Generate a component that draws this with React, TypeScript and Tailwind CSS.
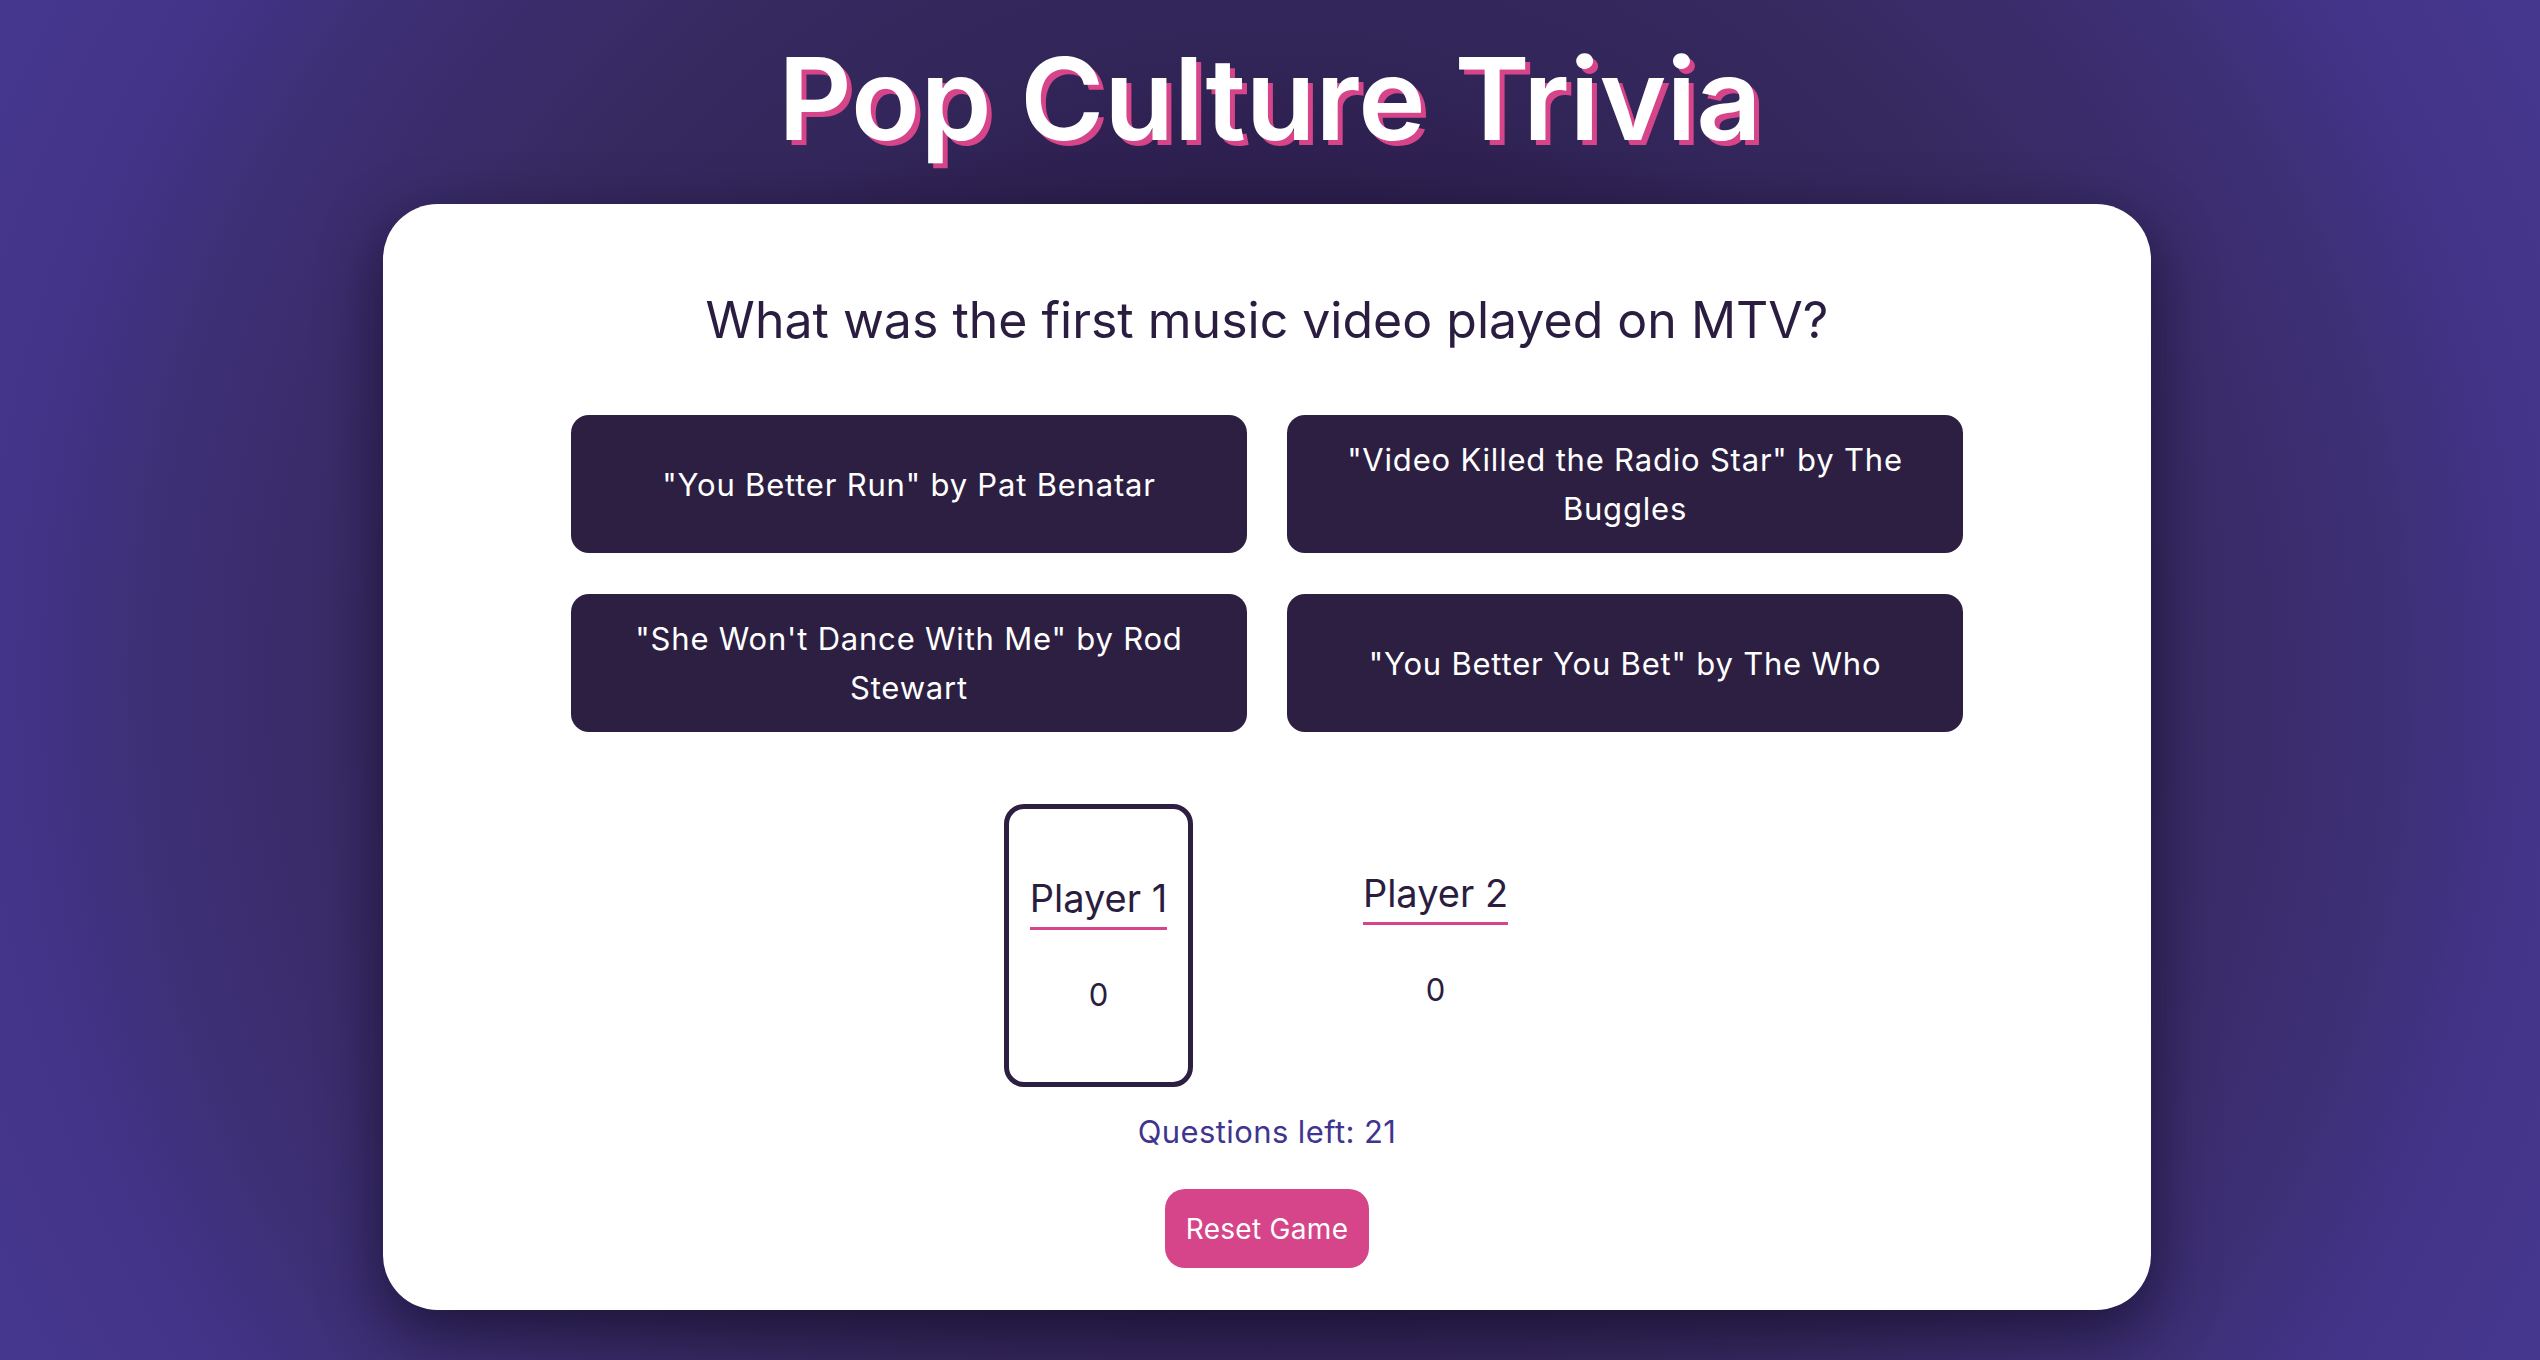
import { useState } from "react";

const answers = [
  '"You Better Run" by Pat Benatar',
  '"Video Killed the Radio Star" by The Buggles',
  '"She Won\'t Dance With Me" by Rod Stewart',
  '"You Better You Bet" by The Who',
];

export default function App() {
  const [scores] = useState([0, 0]);
  const [active] = useState(0);

  return (
    <div className="min-h-screen w-full bg-[radial-gradient(circle_at_center,#1e1436_0%,#2a1d4a_30%,#33265a_47%,#36295f_57%,#3d2f74_77%,#43348a_88%,#46378e_100%)] font-['Inter','Noto_Sans',sans-serif] flex flex-col items-center">
      {/* Title */}
      <h1 className="mt-[42px] text-[114px] leading-[114px] font-semibold text-white [text-shadow:5px_5px_0_#d6458a]">
        Pop Culture Trivia
      </h1>

      {/* Card */}
      <div className="mt-[48px] mr-[6px] w-[1768px] bg-white rounded-[55px] shadow-[0_20px_60px_rgba(10,5,25,0.6)] pt-[80px] pb-[42px] flex flex-col items-center">
        <h2 className="text-[50px] leading-[72px] text-[#2a1d40] font-normal">
          What was the first music video played on MTV?
        </h2>

        <div className="mt-[59px] grid grid-cols-[676px_676px] gap-x-[40px] gap-y-[41px]">
          {answers.map((a) => (
            <button
              key={a}
              className="h-[138px] rounded-[18px] bg-[#2c1f42] text-white text-[31px] leading-[49px] tracking-[0.8px] px-10 flex items-center justify-center text-center"
            >
              {a}
            </button>
          ))}
        </div>

        {/* Scoreboard */}
        <div className="mt-[72px] flex items-start gap-[148px]">
          {[0, 1].map((i) => (
            <div
              key={i}
              className={`w-[189px] flex flex-col items-center pt-[65px] pb-[65px] ${
                i === active ? "border-[5px] border-[#2c1f42] rounded-[20px]" : ""
              }`}
            >
              <div className="text-[38px] leading-[48px] text-[#2a1d40] pb-[5px] border-b-[3px] border-[#d6458a]">
                Player {i + 1}
              </div>
              <div className="mt-[42px] text-[31px] leading-[45px] text-[#2a1d40]">
                {scores[i]}
              </div>
            </div>
          ))}
        </div>

        <p className="mt-[22px] text-[31px] leading-[45px] tracking-[0.4px] text-[#3f3590]">
          Questions left: 21
        </p>

        <button className="mt-[35px] h-[79px] w-[204px] rounded-[20px] bg-[#d6458a] text-white text-[28px] tracking-[0.3px]">
          Reset Game
        </button>
      </div>
    </div>
  );
}
